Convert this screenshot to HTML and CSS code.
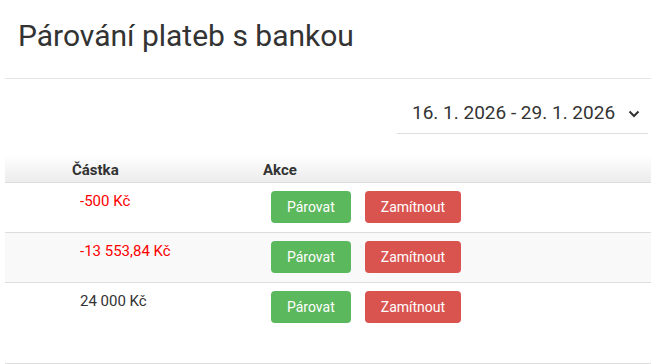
FILE: index.html
```html
<!DOCTYPE html>
<html>
<head>
  <meta charset="utf-8">
  <title>Párování plateb s bankou</title>
  <link rel="stylesheet" href="styles.css">
</head>
<body>
<div class="page">
  <div class="page-head">
    <h1>Párování plateb s bankou</h1>
  </div>

  <div class="filters">
    <div class="date-range">
      <span>16. 1. 2026 - 29. 1. 2026</span>
      <svg class="chevron" width="12" height="8" viewBox="0 0 12 8"><polyline points="1.5,1.5 6,6 10.5,1.5" fill="none" stroke="#333" stroke-width="2"/></svg>
    </div>
  </div>

  <table class="payments">
    <thead>
      <tr>
        <th class="col-amount">Částka</th>
        <th class="col-actions">Akce</th>
      </tr>
    </thead>
    <tbody>
      <tr>
        <td class="amount negative">-500 Kč</td>
        <td class="actions"><button class="btn btn-pair">Párovat</button><button class="btn btn-reject">Zamítnout</button></td>
      </tr>
      <tr>
        <td class="amount negative">-13 553,84 Kč</td>
        <td class="actions"><button class="btn btn-pair">Párovat</button><button class="btn btn-reject">Zamítnout</button></td>
      </tr>
      <tr>
        <td class="amount">24 000 Kč</td>
        <td class="actions"><button class="btn btn-pair">Párovat</button><button class="btn btn-reject">Zamítnout</button></td>
      </tr>
    </tbody>
  </table>

  <div class="page-foot"></div>
</div>
</body>
</html>
```

FILE: styles.css
```css
* {
	box-sizing: border-box;
}

body {
	margin: 0;
	font-family: Roboto, "Liberation Sans", sans-serif;
	color: #333;
	background: #fff;
}

.page {
	padding-left: 5px;
}

.page-head {
	padding: 18px 13px 24px;
	border-bottom: 1px solid #e5e5e5;
}

.page-head h1 {
	margin: 0;
	font-size: 30px;
	font-weight: 400;
	line-height: 36px;
}

.filters {
	display: flex;
	justify-content: flex-end;
	padding: 22px 3px 0 0;
}

.date-range {
	display: flex;
	align-items: center;
	justify-content: space-between;
	width: 251px;
	padding: 0 8px 8px 15px;
	border-bottom: 1px solid #ddd;
	font-size: 19px;
	line-height: 24px;
}

.chevron {
	margin-top: 2px;
}

.payments {
	width: 100%;
	margin-top: 21px;
	border-collapse: collapse;
	font-size: 15px;
}

.payments th {
	height: 27px;
	padding: 0;
	text-align: left;
	font-weight: 700;
	background: linear-gradient(#fff, #ececec);
	border-bottom: 1px solid #ddd;
	vertical-align: middle;
}

.payments .col-amount {
	width: 258px;
	padding-left: 67px;
	padding-top: 3px;
}

.payments .col-actions {
	padding-top: 3px;
}

.payments td {
	padding: 8px 0 9px;
	vertical-align: top;
	line-height: 20px;
	border-bottom: 1px solid #ddd;
}

.payments tbody tr:nth-child(even) td {
	background: #f9f9f9;
}

.payments tbody tr:last-child td {
	border-bottom: none;
}

.payments td.amount {
	padding-left: 75px;
}

.amount.negative {
	color: #f00;
}

.payments td.actions {
	padding-left: 8px;
}

.btn {
	height: 32px;
	padding: 0 16px;
	margin-right: 14px;
	border: none;
	border-radius: 4px;
	font-family: inherit;
	font-size: 14px;
	color: #fff;
	cursor: pointer;
}

.btn-pair {
	background: #5cb85c;
}

.btn-reject {
	background: #d9534f;
}

.page-foot {
	margin-top: 31px;
	border-top: 1px solid #ddd;
}
```
